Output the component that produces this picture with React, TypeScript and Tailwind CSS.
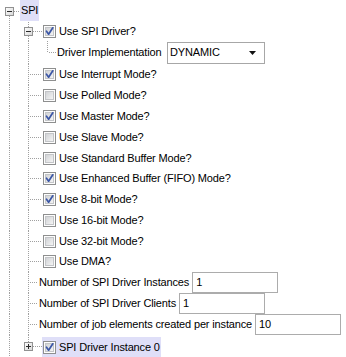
import React from 'react'

type GutterKind = 'root' | 'branch' | 'leaf' | 'driver' | 'num' | 'last'

const LINE = '#a0a0a0'

function Expander({ x, y, plus }: { x: number; y: number; plus?: boolean }) {
  return (
    <g shapeRendering="crispEdges">
      <rect x={x + 0.5} y={y + 0.5} width={8} height={8} fill="url(#expgrad)" stroke="#919191" />
      <line x1={x + 2} y1={y + 4.5} x2={x + 7} y2={y + 4.5} stroke="#2a2a2a" />
      {plus && <line x1={x + 4.5} y1={y + 2} x2={x + 4.5} y2={y + 7} stroke="#2a2a2a" />}
    </g>
  )
}

function VLine({ x, y1, y2 }: { x: number; y1: number; y2: number }) {
  return <line x1={x + 0.5} y1={y1} x2={x + 0.5} y2={y2} stroke={LINE} strokeDasharray="1 1" shapeRendering="crispEdges" />
}

function HLine({ y, x1, x2 }: { y: number; x1: number; x2: number }) {
  return <line x1={x1} y1={y + 0.5} x2={x2} y2={y + 0.5} stroke={LINE} strokeDasharray="1 1" shapeRendering="crispEdges" />
}

function Gutter({ kind, h }: { kind: GutterKind; h: number }) {
  const c = Math.floor(h / 2)
  const width = { root: 20, branch: 42, leaf: 42, driver: 57, num: 38, last: 42 }[kind]
  return (
    <svg width={width} height={h} className="shrink-0 block">
      <defs>
        <linearGradient id="expgrad" x1="0" y1="0" x2="1" y2="1">
          <stop offset="0" stopColor="#ffffff" />
          <stop offset="1" stopColor="#d6d6d6" />
        </linearGradient>
      </defs>
      {kind === 'root' ? (
        <>
          <VLine x={9} y1={c + 5} y2={h} />
          <HLine y={c} x1={14} x2={20} />
          <Expander x={5} y={c - 4} />
        </>
      ) : (
        <VLine x={9} y1={0} y2={h} />
      )}
      {kind === 'branch' && (
        <>
          <VLine x={28} y1={0} y2={h} />
          <HLine y={c} x1={33} x2={42} />
          <Expander x={24} y={c - 4} />
        </>
      )}
      {kind === 'leaf' && (
        <>
          <VLine x={28} y1={0} y2={h} />
          <HLine y={c} x1={30} x2={41} />
        </>
      )}
      {kind === 'driver' && (
        <>
          <VLine x={28} y1={0} y2={h} />
          <VLine x={47} y1={0} y2={c} />
          <HLine y={c} x1={49} x2={57} />
        </>
      )}
      {kind === 'num' && (
        <>
          <VLine x={28} y1={0} y2={h} />
          <HLine y={c} x1={30} x2={38} />
        </>
      )}
      {kind === 'last' && (
        <>
          <VLine x={28} y1={0} y2={c - 4} />
          <HLine y={c} x1={33} x2={42} />
          <Expander x={24} y={c - 4} plus />
        </>
      )}
    </svg>
  )
}

function CheckBox({ checked }: { checked?: boolean }) {
  return (
    <svg width={13} height={13} className="shrink-0 block">
      <defs>
        <linearGradient id="cbgrad" x1="0" y1="0" x2="1" y2="1">
          <stop offset="0" stopColor="#cfd1d4" />
          <stop offset="1" stopColor="#f6f6f6" />
        </linearGradient>
      </defs>
      <rect x={0.5} y={0.5} width={12} height={12} fill="#fdfdfd" stroke="#8e8f8f" shapeRendering="crispEdges" />
      <rect x={2.5} y={2.5} width={8} height={8} fill="url(#cbgrad)" stroke="#c3c5c8" shapeRendering="crispEdges" />
      {checked && (
        <path d="M3.5 6.2 L5.6 9.2 L9.8 2.8" fill="none" stroke="#3b56a6" strokeWidth={1.7} strokeLinecap="round" strokeLinejoin="round" />
      )}
    </svg>
  )
}

const checkItems: { label: string; checked: boolean; h: number }[] = [
  { label: 'Use Interrupt Mode?', checked: true, h: 21 },
  { label: 'Use Polled Mode?', checked: false, h: 21 },
  { label: 'Use Master Mode?', checked: true, h: 21 },
  { label: 'Use Slave Mode?', checked: false, h: 21 },
  { label: 'Use Standard Buffer Mode?', checked: false, h: 20 },
  { label: 'Use Enhanced Buffer (FIFO) Mode?', checked: true, h: 21 },
  { label: 'Use 8-bit Mode?', checked: true, h: 21 },
  { label: 'Use 16-bit Mode?', checked: false, h: 21 },
  { label: 'Use 32-bit Mode?', checked: false, h: 20 },
  { label: 'Use DMA?', checked: false, h: 21 },
]

const numberItems = [
  { label: 'Number of SPI Driver Instances', value: '1' },
  { label: 'Number of SPI Driver Clients', value: '1' },
  { label: 'Number of job elements created per instance', value: '10' },
]

export default function App() {
  return (
    <div
      className="w-[346px] h-[357px] overflow-hidden bg-white text-[11px] tracking-[-0.15px] text-black leading-none whitespace-nowrap select-none"
      style={{ fontFamily: '"Liberation Sans", Arial, sans-serif' }}
    >
      {/* SPI root */}
      <div className="flex h-[22px]">
        <Gutter kind="root" h={22} />
        <div className="h-[21px] bg-[#dfdff8] px-[1px] flex items-center">SPI</div>
      </div>

      {/* Use SPI Driver? */}
      <div className="flex items-center h-[19px]">
        <Gutter kind="branch" h={19} />
        <div className="ml-[1px]">
          <CheckBox checked />
        </div>
        <span className="ml-[3px]">Use SPI Driver?</span>
      </div>

      {/* Driver Implementation */}
      <div className="flex items-center h-[23px]">
        <Gutter kind="driver" h={23} />
        <span className="w-[110px] shrink-0">Driver Implementation</span>
        <div className="shrink-0 w-[98px] h-[22px] border border-[#a7a7a7] flex items-center justify-between pl-[2px] pr-[8px]">
          <span>DYNAMIC</span>
          <svg width={7} height={4} className="block">
            <path d="M0 0 H7 L3.5 4 Z" fill="#111" />
          </svg>
        </div>
      </div>

      {checkItems.map((item) => (
        <div key={item.label} className="flex items-center" style={{ height: item.h }}>
          <Gutter kind="leaf" h={item.h} />
          <div className="ml-[1px]">
            <CheckBox checked={item.checked} />
          </div>
          <span className="ml-[3px]">{item.label}</span>
        </div>
      ))}

      {numberItems.map((item) => (
        <div key={item.label} className="flex items-center h-[21px]">
          <Gutter kind="num" h={21} />
          <span className="ml-[1px] shrink-0">{item.label}</span>
          <div className="ml-[3px] shrink-0 w-[86px] h-[21px] border border-[#acacac] flex items-center pl-[3px]">
            {item.value}
          </div>
        </div>
      ))}

      {/* SPI Driver Instance 0 */}
      <div className="flex h-[23px]">
        <Gutter kind="last" h={23} />
        <div className="mt-[2px] h-[21px] bg-[#dfdff8] flex items-center pl-[1px] pr-[1px]">
          <CheckBox checked />
          <span className="ml-[3px]">SPI Driver Instance 0</span>
        </div>
      </div>
    </div>
  )
}
